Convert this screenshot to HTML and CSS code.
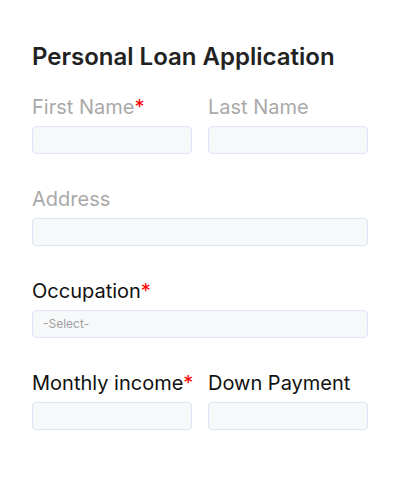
FILE: index.html
```html
<!DOCTYPE html>
<html>
<head>
<meta charset="utf-8">
<link rel="stylesheet" href="styles.css">
</head>
<body>
<form class="form">
  <h1 class="title">Personal Loan Application</h1>
  <div class="row two">
    <div class="field">
      <label class="label muted">First Name<span class="req">*</span></label>
      <div class="input"></div>
    </div>
    <div class="field">
      <label class="label muted">Last Name</label>
      <div class="input"></div>
    </div>
  </div>
  <div class="row">
    <div class="field">
      <label class="label muted">Address</label>
      <div class="input"></div>
    </div>
  </div>
  <div class="row">
    <div class="field">
      <label class="label">Occupation<span class="req">*</span></label>
      <div class="input select">-Select-</div>
    </div>
  </div>
  <div class="row two">
    <div class="field">
      <label class="label">Monthly income<span class="req">*</span></label>
      <div class="input"></div>
    </div>
    <div class="field">
      <label class="label">Down Payment</label>
      <div class="input"></div>
    </div>
  </div>
</form>
</body>
</html>
```
FILE: styles.css
```css
html, body {
  margin: 0;
  padding: 0;
  background: #ffffff;
}
body {
  font-family: Inter, "Noto Sans", sans-serif;
  width: 400px;
  height: 480px;
  overflow: hidden;
}
.form {
  padding: 42px 32px 0 32px;
  display: flex;
  flex-direction: column;
  gap: 33px;
}
.title {
  margin: 0 0 -10px 0;
  font-size: 24px;
  line-height: 30px;
  font-weight: 600;
  color: #222222;
}
.row {
  display: grid;
  grid-template-columns: minmax(0, 1fr);
  gap: 16px;
}
.row.two {
  grid-template-columns: minmax(0, 1fr) minmax(0, 1fr);
}
.field {
  display: flex;
  flex-direction: column;
  min-width: 0;
}
.label {
  font-size: 20px;
  line-height: 24px;
  color: #111111;
  margin-bottom: 7px;
  white-space: nowrap;
}
.label.muted {
  color: #a9a9a9;
}
.req {
  color: #ff0000;
}
.input {
  box-sizing: border-box;
  height: 28px;
  background: #f7f8fa;
  border: 1px solid #dfe4f7;
  border-radius: 4px;
}
.select {
  font-size: 12px;
  line-height: 26px;
  color: #a0a0a0;
  padding-left: 10px;
}
```
